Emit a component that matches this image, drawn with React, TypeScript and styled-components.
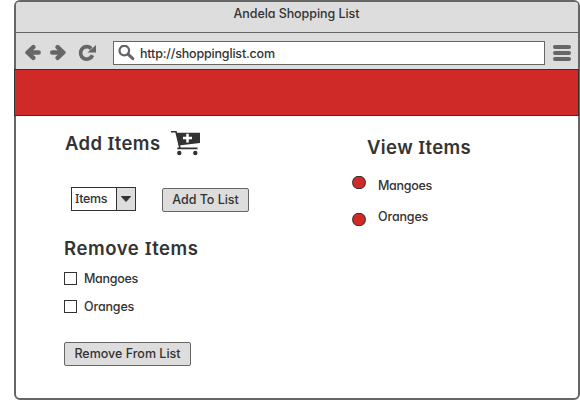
import React from "react";
import styled, { createGlobalStyle } from "styled-components";

const Global = createGlobalStyle`
  * { box-sizing: border-box; }
  html, body { margin: 0; background: #fff; overflow: hidden; }
  body {
    font-family: Inter, "Liberation Sans", sans-serif;
    font-feature-settings: "cv11" 1;
    color: #333;
  }
`;

const Window = styled.div`
  width: 566px;
  height: 400px;
  margin-left: 14px;
  border: 2px solid #666;
  border-radius: 6px;
  background: #fff;
`;

const TitleBar = styled.header`
  height: 31px;
  padding: 3px 0 0 217.5px;
  border-bottom: 1px solid #666;
  border-radius: 3px 3px 0 0;
  background: #ddd;
`;

const Label = styled.span<{ $spacing?: number }>`
  display: block;
  font-size: 12.5px;
  line-height: 18px;
  font-weight: 500;
  white-space: nowrap;
  letter-spacing: ${(p) => p.$spacing ?? 0}px;
`;

const Toolbar = styled.nav`
  display: flex;
  align-items: flex-start;
  height: 36px;
  padding: 8px 6px 0 8px;
  background: #ddd;
  svg { display: block; flex: none; }
`;

const NavIcons = styled.div`
  display: flex;
  width: 89px;
  padding-top: 3px;
`;

const AddressBar = styled.div`
  display: flex;
  width: 432px;
  height: 24px;
  padding: 3px 0 0 4px;
  gap: 5px;
  border: 1px solid #666;
  background: #fff;
`;

const MenuButton = styled.div`
  display: flex;
  flex-direction: column;
  gap: 2px;
  width: 18px;
  margin: 4px 0 0 8px;
`;

const MenuBar = styled.i`
  height: 4px;
  border-radius: 2px;
  background: #666;
`;

const Banner = styled.div`
  height: 47px;
  margin: 0 -1px 0 -2px;
  border: 1px solid #333;
  background: #cf2a27;
`;

const Content = styled.main`
  display: grid;
  grid-template-columns: 288px 1fr;
  padding-left: 48px;
`;

const Column = styled.section<{ $top: number }>`
  padding-top: ${(p) => p.$top}px;
`;

const Heading = styled.h2<{ $spacing: number; $indent?: number }>`
  margin: 0 0 0 ${(p) => p.$indent ?? 0}px;
  font-size: 18.5px;
  line-height: 24px;
  font-weight: 600;
  letter-spacing: ${(p) => p.$spacing}px;
  white-space: nowrap;
`;

const SerifCap = styled.span`
  font-family: "Noto Sans", sans-serif;
  line-height: 1;
`;

const HeadingRow = styled.div`
  display: flex;
  height: 28px;
  h2 { width: 105px; }
  svg { margin-top: -1px; }
`;

const Controls = styled.div`
  display: flex;
  align-items: flex-start;
  gap: 26px;
  margin: 28px 0 24px 7px;
`;

const Select = styled.div`
  display: flex;
  width: 65px;
  height: 24px;
  border: 1px solid #333;
  background: #fff;
`;

const SelectValue = styled.div`
  width: 44px;
  padding: 2px 0 0 3px;
`;

const SelectArrow = styled.div`
  display: flex;
  flex: 1;
  align-items: center;
  justify-content: center;
  border-left: 1px solid #333;
  background: #ddd;
`;

const Button = styled.button<{ $width: number }>`
  display: flex;
  align-items: center;
  justify-content: center;
  width: ${(p) => p.$width}px;
  height: 24px;
  padding: 0;
  border: 1px solid #666;
  border-radius: 2px;
  background: #ddd;
  color: #333;
  font: inherit;
  font-feature-settings: inherit;
`;

const AddButton = styled(Button)`
  margin-top: 1px;
`;

const CheckRow = styled.div`
  display: flex;
  align-items: center;
  gap: 7px;
  height: 28px;
  span { padding-top: 1px; }
`;

const CheckList = styled.div`
  margin: 4px 0 22px;
`;

const Checkbox = styled.i`
  width: 13px;
  height: 13px;
  border: 1px solid #333;
  background: #fff;
`;

const BulletRow = styled.div<{ $top: number; $drop: number }>`
  display: flex;
  gap: 12px;
  margin-top: ${(p) => p.$top}px;
  svg { display: block; margin-top: ${(p) => p.$drop}px; }
`;

const Bullet = () => (
  <svg width="14" height="13" viewBox="0 0 14 13">
    <path
      d="M4.5.5h5q4 1.500 4 6t-4 6h-5q-4-1.500-4-6t4-6z"
      fill="#cf2a27"
      stroke="#333"
    />
  </svg>
);

const Arrow = ({ flip }: { flip?: boolean }) => (
  <svg width="25" height="18" viewBox="0 0 25 18">
    <path
      d="M9.300 3.100 3.500 8.500l5.800 5.300M4 8.500h10.700"
      transform={flip ? "translate(17.9) scale(-1 1)" : undefined}
      fill="none"
      stroke="#666"
      strokeWidth="4.4"
      strokeLinecap="round"
      strokeLinejoin="round"
    />
  </svg>
);

const Cart = () => (
  <svg width="32" height="27" viewBox="0 0 32 27">
    <path d="M1 1.800h5l4 16.500M7.300 18.400h20.200" fill="none" stroke="#333" strokeWidth="1.6" />
    <path d="M6.300 2.700H30v10.200L8.800 15.600z" fill="#333" />
    <path d="M13 8h9M17.500 3.800v8.600" stroke="#fff" strokeWidth="2.5" />
    <circle cx="9.300" cy="23" r="2.200" fill="#333" />
    <circle cx="25.300" cy="23" r="2.200" fill="#333" />
  </svg>
);

export default function App() {
  return (
    <>
      <Global />
      <Window>
        <TitleBar>
          <Label $spacing={-0.07}>Andela Shopping List</Label>
        </TitleBar>
        <Toolbar>
          <NavIcons>
            <Arrow />
            <Arrow flip />
            <svg width="24" height="18" viewBox="0 0 24 18">
              <path
                d="M18.500 11.200A6.200 6.200 0 1 1 17.200 4.600"
                fill="none"
                stroke="#666"
                strokeWidth="3.7"
              />
              <path d="M22 1v7.500h-8.500z" fill="#666" />
            </svg>
          </NavIcons>
          <AddressBar>
            <svg width="17" height="17" viewBox="0 0 17 17">
              <circle cx="6.300" cy="5.600" r="4.800" fill="none" stroke="#666" strokeWidth="2.3" />
              <path d="m10 9.200 4.800 4.500" stroke="#666" strokeWidth="3" strokeLinecap="round" />
            </svg>
            <Label $spacing={-0.18}>http://shoppinglist.com</Label>
          </AddressBar>
          <MenuButton>
            <MenuBar />
            <MenuBar />
            <MenuBar />
          </MenuButton>
        </Toolbar>
        <Banner />
        <Content>
          <Column $top={15}>
            <HeadingRow>
              <Heading $spacing={0.4} $indent={1}>Add <SerifCap>I</SerifCap>tems</Heading>
              <Cart />
            </HeadingRow>
            <Controls>
              <Select>
                <SelectValue>
                  <Label $spacing={-0.3}><SerifCap>I</SerifCap>tems</Label>
                </SelectValue>
                <SelectArrow>
                  <svg width="10" height="6" viewBox="0 0 10 6">
                    <path d="M.4.5h9.200L5 5.500z" fill="#333" stroke="#333" strokeLinejoin="round" />
                  </svg>
                </SelectArrow>
              </Select>
              <AddButton $width={87}>
                <Label $spacing={-0.05}>Add To List</Label>
              </AddButton>
            </Controls>
            <Heading $spacing={0.6}>Remove <SerifCap>I</SerifCap>tems</Heading>
            <CheckList>
              <CheckRow>
                <Checkbox />
                <Label $spacing={-0.3}>Mangoes</Label>
              </CheckRow>
              <CheckRow>
                <Checkbox />
                <Label $spacing={-0.15}>Oranges</Label>
              </CheckRow>
            </CheckList>
            <Button $width={127}>
              <Label>Remove From List</Label>
            </Button>
          </Column>
          <Column $top={19}>
            <Heading $spacing={0.4} $indent={15}>View <SerifCap>I</SerifCap>tems</Heading>
            <BulletRow $top={18} $drop={-1}>
              <Bullet />
              <Label $spacing={-0.3}>Mangoes</Label>
            </BulletRow>
            <BulletRow $top={13} $drop={5}>
              <Bullet />
              <Label $spacing={-0.15}>Oranges</Label>
            </BulletRow>
          </Column>
        </Content>
      </Window>
    </>
  );
}
